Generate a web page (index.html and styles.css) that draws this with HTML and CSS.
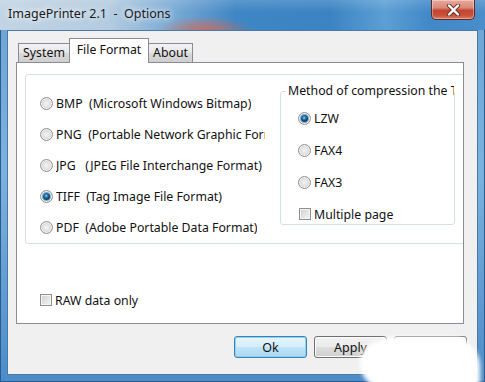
FILE: index.html
```html
<!DOCTYPE html>
<html lang="en">
<head>
<meta charset="UTF-8">
<title>ImagePrinter 2.1 - Options</title>
<link rel="stylesheet" href="styles.css">
</head>
<body>

<div class="window">

    <!-- TITLE BAR -->
    <div class="titlebar">
        <span class="title">ImagePrinter 2.1&nbsp; -&nbsp; Options</span>
        <button class="close">
            <svg width="15" height="12" viewBox="0 0 15 12">
                <path d="M3 1.5 L12 10.5 M12 1.5 L3 10.5" stroke="#6a2f26" stroke-width="4.2" stroke-linecap="round"/>
                <path d="M3 1.5 L12 10.5 M12 1.5 L3 10.5" stroke="#fff" stroke-width="2.4" stroke-linecap="round"/>
            </svg>
        </button>
    </div>

    <div class="client">

        <!-- TABS -->
        <div class="tabs">
            <div class="tab tab-system">System</div>
            <div class="tab tab-format active">File Format</div>
            <div class="tab tab-about">About</div>
        </div>

        <div class="panel">

            <div class="formats">
                <div class="format-list">
                    <label class="opt"><span class="radio"></span><span class="txt">BMP&nbsp; (Microsoft Windows Bitmap)</span></label>
                    <label class="opt"><span class="radio"></span><span class="txt">PNG&nbsp; (Portable Network Graphic Format)</span></label>
                    <label class="opt"><span class="radio"></span><span class="txt">JPG&nbsp;&nbsp; (JPEG File Interchange Format)</span></label>
                    <label class="opt"><span class="radio checked"></span><span class="txt">TIFF&nbsp; (Tag Image File Format)</span></label>
                    <label class="opt"><span class="radio"></span><span class="txt">PDF&nbsp; (Adobe Portable Data Format)</span></label>
                </div>

                <fieldset class="compression">
                    <legend>Method of compression the TIFF</legend>
                    <div class="comp-list">
                        <label class="opt"><span class="radio checked"></span>LZW</label>
                        <label class="opt"><span class="radio"></span>FAX4</label>
                        <label class="opt"><span class="radio"></span>FAX3</label>
                        <label class="opt"><span class="check"></span>Multiple page</label>
                    </div>
                </fieldset>
            </div>

            <label class="opt raw"><span class="check"></span>RAW data only</label>

        </div>

        <!-- BUTTONS -->
        <div class="buttons">
            <button class="btn default">Ok</button>
            <button class="btn">Apply</button>
            <button class="btn">Cancel</button>
        </div>

    </div>

    <div class="smudge"></div>
    <div class="smudge smudge-2"></div>

</div>

</body>
</html>
```

FILE: styles.css
```css
* {
    box-sizing: border-box;
}

body {
    margin: 0;
    width: 485px;
    height: 382px;
    overflow: hidden;
    font-family: "Noto Sans", "Open Sans", sans-serif;
    font-size: 12.3px;
    color: #111;
}

/* WINDOW FRAME */
.window {
    position: relative;
    height: 382px;
    display: flex;
    flex-direction: column;
    background: linear-gradient(180deg, #6aa3d5, #7cb2df 45%, #4c8cc8);
    box-shadow: inset 1px 0 0 #2c5c8e, inset -1px 0 0 #2c5c8e, inset 0 -1px 0 #2c5c8e;
    overflow: hidden;
}

/* TITLE BAR */
.titlebar {
    height: 30px;
    flex: none;
    display: flex;
    justify-content: space-between;
    align-items: flex-start;
    padding: 0 10px 0 8px;
    background:
        radial-gradient(ellipse 48px 15px at 205px 31px, rgba(210, 105, 85, 0.9), rgba(210, 105, 85, 0)),
        linear-gradient(180deg, rgba(255,255,255,0.15), rgba(255,255,255,0) 40%),
        linear-gradient(90deg, #c2d4e4 0, #b3cbe0 110px, #78a9d4 175px, #3f86c4 235px, #3b83c2 330px, #5c9fd5 385px, #4088c7 430px, #4a8ecb 100%);
}

.title {
    margin-top: 5px;
    line-height: 18px;
    font-size: 12.5px;
    color: #1a1a1a;
    text-shadow: 0 0 6px #fff, 0 0 10px rgba(255,255,255,0.8);
}

.close {
    width: 44px;
    height: 20px;
    padding: 0;
    border: 1px solid #5c2a22;
    border-top: none;
    border-radius: 0 0 5px 5px;
    background: linear-gradient(180deg, #e9a89a 0, #d98a7b 40%, #c4452f 55%, #c8503a 80%, #db7c68 100%);
    box-shadow: inset 0 0 0 1px rgba(255,255,255,0.35);
    display: flex;
    align-items: center;
    justify-content: center;
}

/* CLIENT AREA */
.client {
    flex: 1;
    margin: 0 7px 7px;
    background: #f0f0f0;
    border: 1px solid #4a78a8;
    display: flex;
    flex-direction: column;
}

/* TABS */
.tabs {
    height: 24px;
    margin: 7px 0 0 10px;
    display: flex;
    align-items: flex-end;
}

.tab {
    height: 19px;
    line-height: 18px;
    text-align: center;
    border: 1px solid #898c95;
    border-bottom: none;
    background: linear-gradient(180deg, #f3f3f3, #e6e6e6 50%, #dadada 51%, #cfcfcf);
    margin-left: -1px;
}

.tab-system { width: 52px; margin-left: 0; }
.tab-format { width: 80px; }
.tab-about { width: 45px; }

.tab.active {
    height: 25px;
    line-height: 21px;
    margin-bottom: -1px;
    background: #fff;
    position: relative;
    z-index: 1;
}

/* PANEL */
.panel {
    width: 448px;
    height: 262px;
    margin-left: 8px;
    padding: 11px 0 0 8px;
    background: #fff;
    border: 1px solid #898c95;
    overflow: hidden;
}

.formats {
    width: 470px;
    height: 170px;
    display: flex;
    align-items: flex-start;
    padding: 13px 0 0 14px;
    border: 1px solid #d5dfe5;
    border-radius: 3px;
}

.format-list {
    width: 225px;
    flex: none;
    display: flex;
    flex-direction: column;
}

.opt {
    display: flex;
    align-items: center;
    white-space: nowrap;
}

.format-list .opt {
    height: 31px;
    overflow: hidden;
}

.txt {
    overflow: hidden;
}

/* RADIO + CHECK */
.radio {
    width: 13px;
    height: 13px;
    flex: none;
    margin-right: 3px;
    border-radius: 50%;
    border: 1px solid #929292;
    background: radial-gradient(circle at 50% 50%, #f6f6f6 0, #e4e4e4 3px, #cfcfcf 6px);
    box-shadow: inset 0 0 0 1px #f2f2f2;
    display: flex;
    align-items: center;
    justify-content: center;
}

.radio.checked::after {
    content: "";
    width: 7px;
    height: 7px;
    border-radius: 50%;
    background: radial-gradient(circle at 45% 40%, #9ad4f6 0, #2b78b0 1.6px, #123a5c 3.5px);
    box-shadow: 0 0 0 1px #6aaedc;
}

.check {
    width: 12px;
    height: 12px;
    flex: none;
    margin-right: 3px;
    border: 1px solid #8f8f8f;
    background: linear-gradient(135deg, #cfcfcf, #f6f6f6);
    box-shadow: inset 0 0 0 1px #f4f4f4;
}

/* COMPRESSION GROUP */
.compression {
    width: 175px;
    height: 142px;
    margin: -5px 0 0 15px;
    padding: 0;
    min-width: 0;
    border: 1px solid #d5dfe5;
    border-radius: 3px;
}

.compression legend {
    width: 168px;
    margin-left: 5px;
    padding: 0 0 0 2px;
    line-height: 16px;
    white-space: nowrap;
    overflow: hidden;
}

.comp-list {
    padding: 3px 0 0 17px;
}

.comp-list .opt {
    height: 32px;
}

.comp-list .check {
    margin-left: 1px;
    margin-right: 3px;
}

/* RAW */
.raw {
    height: 18px;
    margin: 47px 0 0 15px;
}

/* BUTTONS */
.buttons {
    display: flex;
    justify-content: flex-end;
    gap: 7px;
    margin: 12px 10px 0 0;
}

.btn {
    width: 73px;
    height: 22px;
    padding: 0;
    font-family: inherit;
    font-size: 12.5px;
    color: #111;
    border: 1px solid #707070;
    border-radius: 3px;
    background: linear-gradient(180deg, #f2f2f2 0, #ebebeb 48%, #dddddd 52%, #cfcfcf 100%);
    box-shadow: inset 0 0 0 1px #fbfbfb;
}

.btn.default {
    border-color: #3c7fb1;
    background: linear-gradient(180deg, #e6f5fd 0, #d4eefb 48%, #bfe4f8 52%, #a9d8f2 100%);
    box-shadow: inset 0 0 0 1px #8fd2f4;
}

/* WHITE SMUDGE OVER THE CORNER */
.smudge {
    position: absolute;
    left: 360px;
    top: 341px;
    width: 120px;
    height: 50px;
    border-radius: 22px 26px 10px 30px;
    background: #fff;
    filter: blur(2px);
}

.smudge-2 {
    left: 378px;
    top: 337px;
    width: 92px;
    height: 30px;
    border-radius: 14px;
}
```
